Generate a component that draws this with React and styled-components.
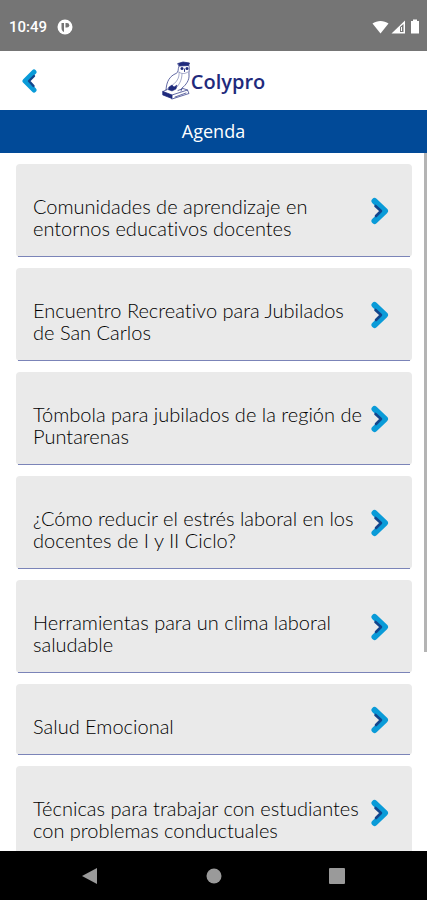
import React from 'react';
import styled, { createGlobalStyle } from 'styled-components';

const GlobalStyle = createGlobalStyle`
  body {
    margin: 0;
    background: #fff;
    font-family: Lato, 'Open Sans', sans-serif;
    font-variant-ligatures: none;
  }
`;

const Screen = styled.div`
  display: flex;
  flex-direction: column;
  height: 100vh;
  overflow: hidden;
`;

const StatusBar = styled.div`
  display: flex;
  flex: none;
  align-items: center;
  justify-content: space-between;
  height: 51px;
  padding: 2px 5px 0 9px;
  box-sizing: border-box;
  background: #757575;
  color: #fff;
`;

const StatusGroup = styled.div`
  display: flex;
  align-items: center;
  gap: ${props => props.$gap}px;
`;

const Clock = styled.span`
  font-family: Roboto, sans-serif;
  font-size: 15px;
  font-weight: 500;
  line-height: 20px;
`;

const Header = styled.header`
  display: grid;
  flex: none;
  grid-template-columns: 60px 1fr 60px;
  align-items: center;
  height: 59px;
`;

const BackButton = styled.button`
  display: flex;
  align-items: center;
  justify-content: center;
  height: 44px;
  padding: 0;
  background: none;
  border: none;
`;

const Brand = styled.div`
  display: flex;
  align-items: center;
  justify-content: center;
`;

const BrandName = styled.span`
  padding-top: 2px;
  font-family: 'Open Sans', sans-serif;
  font-size: 20px;
  font-weight: 600;
  line-height: 28px;
  color: #1f2a7c;
`;

const TitleBar = styled.h1`
  flex: none;
  margin: 0;
  font-family: 'Open Sans', sans-serif;
  font-size: 18px;
  font-weight: 500;
  line-height: 43px;
  text-align: center;
  color: #fff;
  background: #014a98;
`;

const Content = styled.main`
  position: relative;
  flex: 1;
  min-height: 0;
  overflow: hidden;
`;

const List = styled.ul`
  display: flex;
  flex-direction: column;
  gap: 11px;
  margin: 0;
  padding: 11px 15px 11px 16px;
  list-style: none;
`;

const Card = styled.button`
  position: relative;
  display: flex;
  align-items: center;
  gap: 5px;
  width: 100%;
  padding: 0 23px 0 17px;
  font-family: inherit;
  font-variant-ligatures: inherit;
  text-align: left;
  background: #eaeaea;
  border: none;
  border-radius: 4px;

  &::after {
    content: '';
    position: absolute;
    right: 2px;
    bottom: 0;
    left: 2px;
    height: 1px;
    background: #7b84b8;
  }
`;

const CardTitle = styled.span`
  flex: 1;
  padding: 31px 0 18px;
  font-size: 20px;
  font-weight: 300;
  line-height: 22px;
  color: #000;
`;

const ScrollThumb = styled.div`
  position: absolute;
  top: 0;
  right: 0;
  width: 3px;
  height: 499px;
  background: #b4b4b4;
`;

const NavBar = styled.nav`
  display: grid;
  flex: none;
  grid-template-columns: repeat(3, 123px);
  justify-content: center;
  height: 49px;
  background: #000;
`;

const NavButton = styled.button`
  display: flex;
  align-items: center;
  justify-content: center;
  padding: 0;
  background: none;
  border: none;
`;

const events = [
  'Comunidades de aprendizaje en entornos educativos docentes',
  'Encuentro Recreativo para Jubilados de San Carlos',
  'Tómbola para jubilados de la región de Puntarenas',
  '¿Cómo reducir el estrés laboral en los docentes de I y II Ciclo?',
  'Herramientas para un clima laboral saludable',
  'Salud Emocional',
  'Técnicas para trabajar con estudiantes con problemas conductuales',
];

const ChevronRight = () => (
  <svg width="18" height="28" viewBox="0 0 18 28" fill="none" strokeLinecap="round" strokeLinejoin="round">
    <path d="M3.5 4L14 14L3.5 24" stroke="#0a9bd8" strokeWidth="6" />
    <path d="M4.5 9L10 14L5 19" stroke="#12458c" strokeWidth="2.6" />
  </svg>
);

const ChevronLeft = () => (
  <svg width="18" height="24" viewBox="0 0 18 24" fill="none" strokeLinecap="round" strokeLinejoin="round">
    <path d="M13 3L4 12L13 21" stroke="#0a9bd8" strokeWidth="5" />
    <path d="M13 7L8 12L12.5 17" stroke="#12458c" strokeWidth="2.4" />
  </svg>
);

const Owl = () => (
  <svg width="29" height="40" viewBox="0 0 29 40" fill="none" stroke="#1f2a7c" strokeLinecap="round" strokeLinejoin="round">
    <path d="M16 2.5L21 1L27.5 2L26.5 4.5L17.5 5Z" fill="#1f2a7c" strokeWidth="0.8" />
    <path d="M17 5C15.5 9 17 11 14 12.5C8 15 4.5 20 4 29" strokeWidth="0.7" />
    <path d="M27 4.5C28 9 26.5 11 27 14C27.5 19 24 24 20 27L19 30" strokeWidth="0.7" />
    <path d="M17 11C18 17 14 22 9 25M20 13C20 19 17 24 14 27M17.5 11.5C20 13 23 13 26 11" strokeWidth="0.4" />
    <circle cx="20" cy="7.5" r="1.5" fill="#1f2a7c" stroke="none" />
    <circle cx="25" cy="7.5" r="1.5" fill="#1f2a7c" stroke="none" />
    <path d="M22.5 8V10.5" strokeWidth="0.9" />
    <path d="M7 26L10 24L12 26L15 24L14 28L10 30L6 28.5Z" fill="#1f2a7c" strokeWidth="0.5" />
    <path d="M1 30.5L10 34V37.5L1 34Z" fill="#1f2a7c" strokeWidth="0.8" />
    <path d="M1 30.5L5 28.5M10 34L25.5 29L27 32.5L10 38M16 29.5L21 27.5L25.5 29M13 36L24 32" strokeWidth="0.7" />
  </svg>
);

const App = () => (
  <Screen>
    <GlobalStyle />
    <StatusBar>
      <StatusGroup $gap={10}>
        <Clock>10:49</Clock>
        <svg width="16" height="16" viewBox="0 0 16 16">
          <circle cx="8" cy="8" r="7.5" fill="#fff" />
          <path d="M4.5 4H7V13C5.5 12.5 4.5 11 4.5 9Z" fill="#757575" />
          <path d="M8.5 4H10A2 2 0 0 1 10 8.5H8.5Z" fill="#757575" />
        </svg>
      </StatusGroup>
      <StatusGroup $gap={2}>
        <svg width="17" height="14" viewBox="0 0 17 14">
          <path d="M0.5 3.5C5 0 12 0 16.5 3.5L8.5 13.5Z" fill="#fff" />
        </svg>
        <svg width="15" height="14" viewBox="0 0 15 14">
          <path d="M0.5 13.5L14 0.5V13.5Z" fill="#fff" />
          <path d="M9 7L12.5 4V12H9Z" fill="#757575" />
          <path d="M10.5 7V11" stroke="#fff" />
        </svg>
        <svg width="14" height="15" viewBox="0 0 14 15">
          <path d="M5 0.5H9V2H11V14.5H3V2H5Z" fill="#fff" />
        </svg>
      </StatusGroup>
    </StatusBar>
    <Header>
      <BackButton aria-label="Volver">
        <ChevronLeft />
      </BackButton>
      <Brand>
        <Owl />
        <BrandName>Colypro</BrandName>
      </Brand>
    </Header>
    <TitleBar>Agenda</TitleBar>
    <Content>
      <List>
        {events.map(title => (
          <li key={title}>
            <Card>
              <CardTitle>{title}</CardTitle>
              <ChevronRight />
            </Card>
          </li>
        ))}
      </List>
      <ScrollThumb />
    </Content>
    <NavBar>
      <NavButton aria-label="Atrás">
        <svg width="20" height="18" viewBox="0 0 20 18">
          <path d="M1 9L16 1V17Z" fill="#9a9a9a" />
        </svg>
      </NavButton>
      <NavButton aria-label="Inicio">
        <svg width="16" height="16" viewBox="0 0 16 16">
          <circle cx="8" cy="8" r="7.5" fill="#9a9a9a" />
        </svg>
      </NavButton>
      <NavButton aria-label="Recientes">
        <svg width="16" height="16" viewBox="0 0 16 16">
          <rect width="16" height="16" rx="1" fill="#9a9a9a" />
        </svg>
      </NavButton>
    </NavBar>
  </Screen>
);

export default App;
